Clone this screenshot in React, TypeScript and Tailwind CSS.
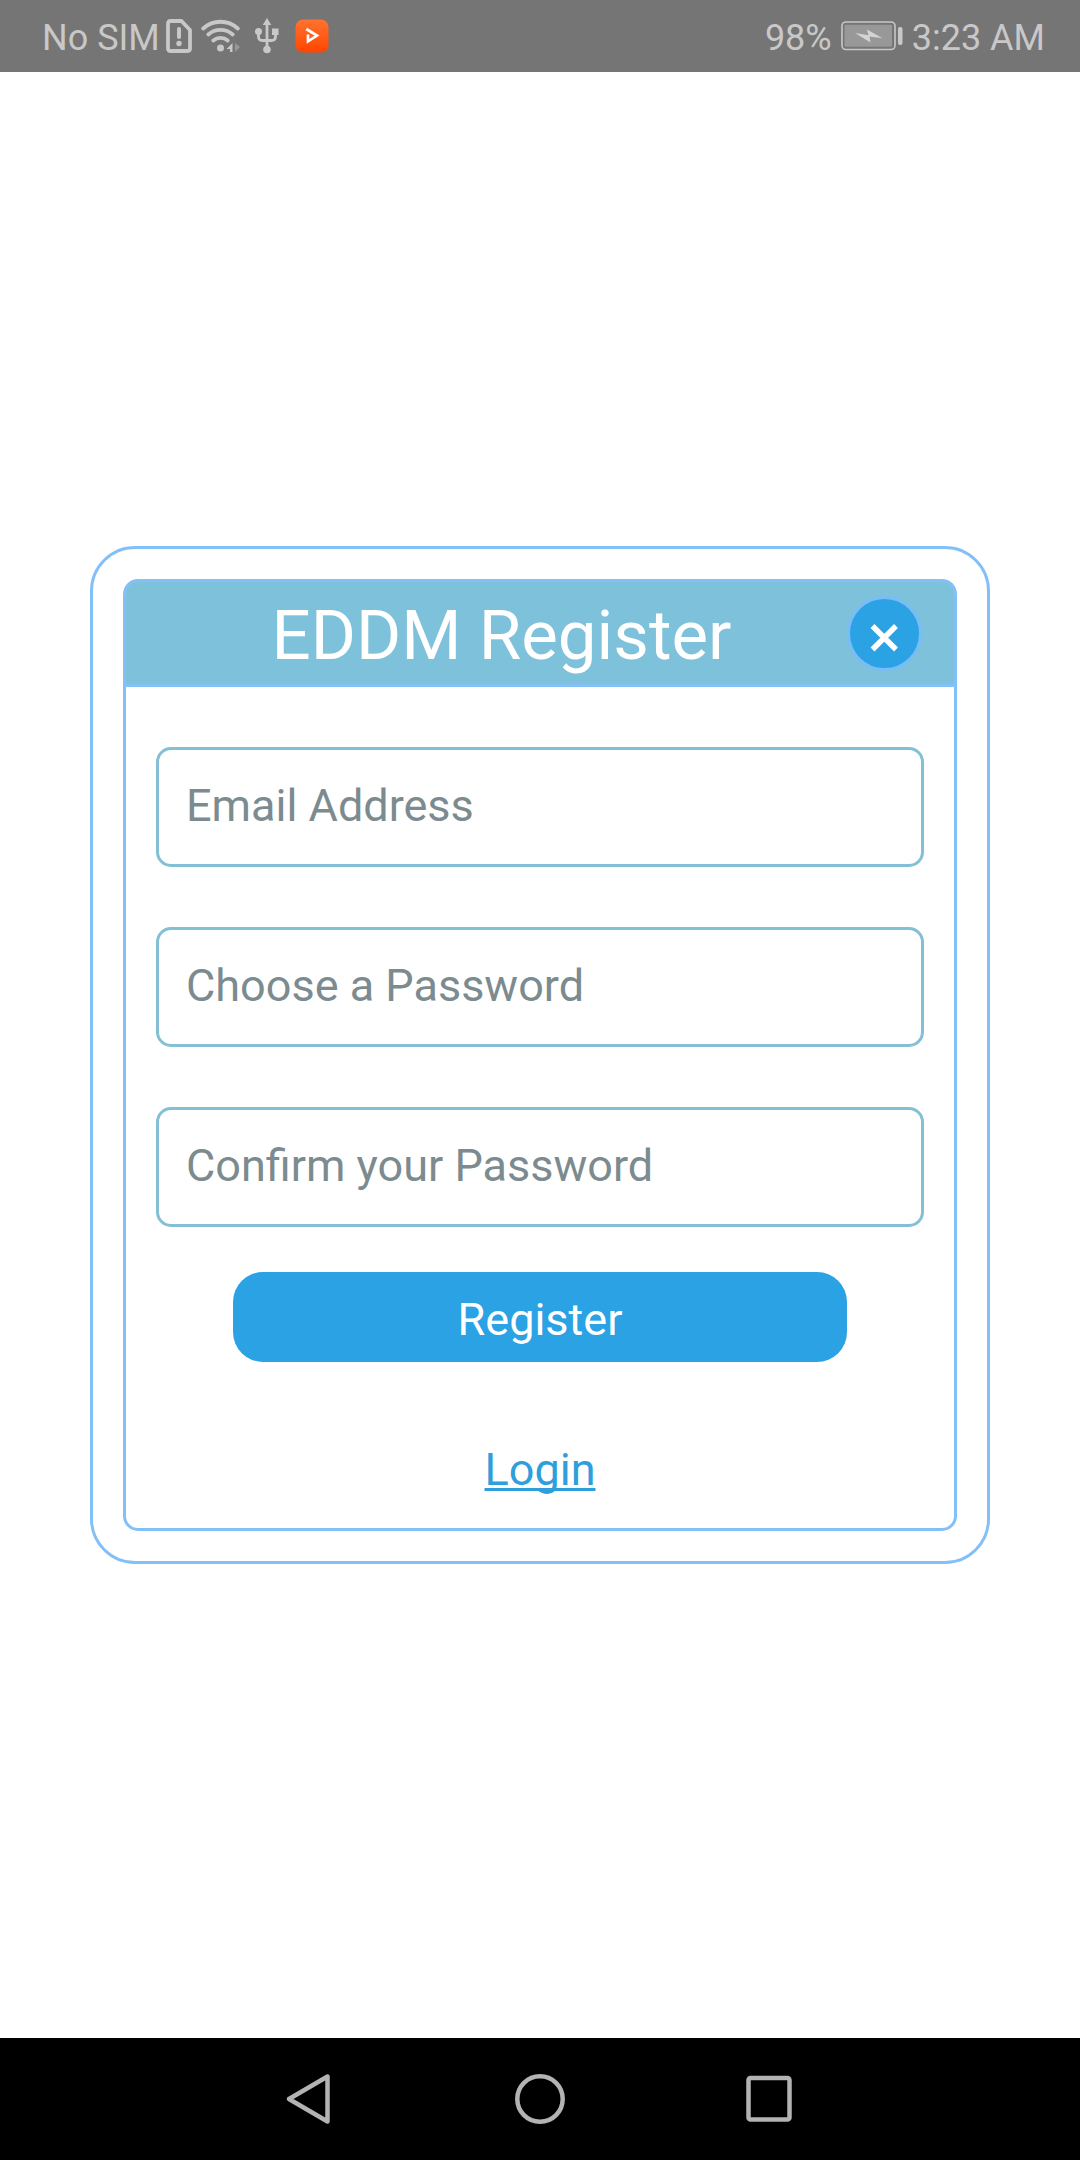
import React from "react";

function SimAlertIcon() {
  return (
    <svg width="26" height="34" viewBox="0 0 26 34" fill="none" aria-hidden="true">
      <path
        d="M4.500 2H15.500L24 11V29.500Q24 32 21.500 32H4.500Q2 32 2 29.500V4.500Q2 2 4.500 2Z"
        stroke="#c8c8c8"
        strokeWidth="3.8"
        strokeLinejoin="round"
      />
      <path d="M13 10V18" stroke="#c8c8c8" strokeWidth="4" strokeLinecap="round" />
      <circle cx="13" cy="24.500" r="2.700" fill="#c8c8c8" />
    </svg>
  );
}

function WifiIcon() {
  return (
    <svg width="40" height="34" viewBox="0 0 40 34" fill="none" aria-hidden="true">
      <g stroke="#c8c8c8" strokeWidth="3.8" strokeLinecap="round">
        <path d="M2.200 9.500C12 0.500 27 0.500 36.800 9.500" />
        <path d="M7.300 15.500C14 9.300 25 9.300 31.700 15.500" />
        <path d="M12.300 21.500C16.500 18 22.500 18 26.700 21.500" />
      </g>
      <circle cx="19.500" cy="29" r="3.500" fill="#c8c8c8" />
      <path d="M31.500 24V33H29V30H25.500Z" fill="#c8c8c8" />
      <path d="M34 24L39 28L34 33Z" fill="#989898" />
    </svg>
  );
}

function UsbIcon() {
  return (
    <svg width="24" height="36" viewBox="0 0 24 36" fill="none" aria-hidden="true">
      <path d="M12 0L16.300 7H7.700Z" fill="#c8c8c8" />
      <path
        d="M12 5V31M3.500 14V18.500Q3.500 22.500 7.500 22.500H16.500Q20.500 22.500 20.500 18.500V14"
        stroke="#c8c8c8"
        strokeWidth="2.800"
      />
      <circle cx="3.500" cy="13.500" r="3.500" fill="#c8c8c8" />
      <rect x="17" y="10.500" width="6.500" height="6.500" fill="#c8c8c8" />
      <circle cx="12" cy="31.500" r="3.800" fill="#c8c8c8" />
    </svg>
  );
}

function PlayerAppIcon() {
  return (
    <svg width="34" height="34" viewBox="0 0 34 34" fill="none" aria-hidden="true">
      <defs>
        <linearGradient id="player" x1="0" y1="0" x2="0" y2="1">
          <stop offset="0" stopColor="#ff7330" />
          <stop offset="1" stopColor="#ff4500" />
        </linearGradient>
      </defs>
      <rect width="33" height="33" x="0.500" y="0.500" rx="7.500" fill="url(#player)" />
      <path d="M11.300 10L22 16.600L13 22.300V15.500" stroke="#fff" strokeWidth="2.700" />
    </svg>
  );
}

function BatteryIcon() {
  return (
    <svg width="62" height="30" viewBox="0 0 62 30" fill="none" aria-hidden="true">
      <rect x="1" y="1" width="53" height="27.500" rx="4" stroke="#c8c8c8" strokeWidth="1.600" />
      <rect x="3.500" y="3.700" width="47.500" height="22" rx="1" fill="#989898" />
      <path d="M14 12L27.500 14.300L26 8.500L41.500 17.200L28.500 15.600L29.500 21.500Z" fill="#d4d4d4" />
      <rect x="57" y="6" width="4.500" height="18" rx="2" fill="#c8c8c8" />
    </svg>
  );
}

function StatusBar() {
  return (
    <header className="flex h-[72px] shrink-0 items-center justify-between bg-[#757575] pr-[35px] pl-[42px] text-[36px] leading-[42px] text-[#c8c8c8]">
      <div className="flex items-center">
        <span className="mr-1.5 pt-[3px]">No SIM</span>
        <SimAlertIcon />
        <span className="ml-[9px]">
          <WifiIcon />
        </span>
        <span className="ml-3.5">
          <UsbIcon />
        </span>
        <span className="ml-4">
          <PlayerAppIcon />
        </span>
      </div>
      <div className="flex items-center gap-[9px]">
        <span className="pt-[3px]">98%</span>
        <BatteryIcon />
        <time className="pt-[3px]">3:23 AM</time>
      </div>
    </header>
  );
}

function Field({ id, label, type }: { id: string; label: string; type: string }) {
  return (
    <input
      id={id}
      type={type}
      aria-label={label}
      placeholder={label}
      className="h-[120px] w-full rounded-[15px] border-3 border-[#83bfd5] bg-white px-[27px] pb-1 text-[45px] text-[#7b8b8f] outline-none placeholder:text-[#7b8b8f]"
    />
  );
}

function RegisterCard() {
  return (
    <section className="w-5/6 rounded-[45px] border-3 border-[#84c0f8] bg-white p-[30px]">
      <div className="flex h-[105px] items-center rounded-t-[15px] border-3 border-b-0 border-[#84c0f8] bg-[#7dc1da] pr-8 pl-[30px]">
        <h1 className="flex-1 pt-1.5 text-center text-[69px] leading-[80px] text-white">EDDM Register</h1>
        <button
          type="button"
          aria-label="Close"
          className="size-[75px] shrink-0 rounded-full border-3 border-[#78bdf8] bg-[#2aa2e4]"
        >
          <svg viewBox="0 0 69 69" className="size-full" fill="none" aria-hidden="true">
            <path d="M22.500 27L46 50.500M46 27L22.500 50.500" stroke="#fff" strokeWidth="5.500" />
          </svg>
        </button>
      </div>
      <form
        className="flex flex-col items-center rounded-b-[15px] border-3 border-[#84c0f8] px-[30px] pt-[60px] pb-[30px]"
        onSubmit={(e) => e.preventDefault()}
      >
        <div className="flex w-full flex-col gap-[60px]">
          <Field id="email" label="Email Address" type="email" />
          <Field id="password" label="Choose a Password" type="password" />
          <Field id="confirm" label="Confirm your Password" type="password" />
        </div>
        <button
          type="submit"
          className="mt-[45px] h-[90px] w-4/5 rounded-[30px] bg-[#2aa2e4] pt-1.5 text-[45px] leading-[60px] text-white"
        >
          Register
        </button>
        <a
          href="#login"
          className="mt-20 text-[45px] leading-[56px] text-[#2f9fdc] underline decoration-3 underline-offset-3 [text-decoration-skip-ink:none]"
        >
          Login
        </a>
      </form>
    </section>
  );
}

function NavBar() {
  return (
    <nav className="flex h-[122px] shrink-0 items-center justify-center bg-black">
      <button type="button" aria-label="Back" className="flex w-[230px] justify-center">
        <svg width="50" height="52" viewBox="0 0 50 52" fill="none" stroke="#b3b3b3" strokeWidth="4.500" strokeLinejoin="round">
          <path d="M42.500 3.500V48.500L4 26Z" />
        </svg>
      </button>
      <button type="button" aria-label="Home" className="flex w-[230px] justify-center">
        <svg width="52" height="52" viewBox="0 0 52 52" fill="none" stroke="#b3b3b3" strokeWidth="4.500">
          <circle cx="26" cy="26" r="22.700" />
        </svg>
      </button>
      <button type="button" aria-label="Recent apps" className="flex w-[230px] justify-center">
        <svg width="52" height="52" viewBox="0 0 52 52" fill="none" stroke="#b3b3b3" strokeWidth="4.500">
          <rect x="4.500" y="5" width="41" height="41.500" rx="2" />
        </svg>
      </button>
    </nav>
  );
}

export default function App() {
  return (
    <div className="flex min-h-screen flex-col bg-white font-['Roboto',sans-serif]">
      <StatusBar />
      <main className="flex flex-1 items-center justify-center">
        <RegisterCard />
      </main>
      <NavBar />
    </div>
  );
}
